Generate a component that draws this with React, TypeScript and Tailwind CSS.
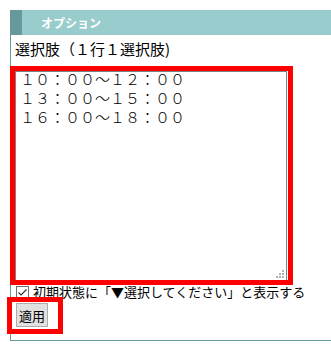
import React, { useState } from 'react';

const jp = { fontFamily: '"Noto Sans CJK JP", "Noto Sans", sans-serif' };

const App: React.FC = () => {
  const [text, setText] = useState('１０：００～１２：００\n１３：００～１５：００\n１６：００～１８：００');
  const [initial, setInitial] = useState(true);

  return (
    <div className="relative w-[331px] h-[353px] bg-white pt-[10px] pl-[10px]" style={jp}>
      <div className="border-l border-b border-[#669999] h-[331px]">
        <div className="flex h-[25px] bg-[#99cccc]">
          <div className="w-[11px] bg-[#669999]" />
          <span className="ml-[19px] text-[12px] font-bold leading-[25px] text-white">オプション</span>
        </div>
        <div className="pl-[4px]">
          <p className="mt-[4px] text-[15px] leading-[20px] text-black">選択肢（１行１選択肢)</p>
          <div className="mt-[12px] w-[272px] h-[210px] border border-[#808080] overflow-hidden">
            <textarea
              value={text}
              onChange={e => setText(e.target.value)}
              className="-mt-[3px] block w-full h-[211px] border-0 px-[4px] pt-0 text-[15px] font-light leading-[19px] text-black outline-none resize-none"
              style={jp}
            />
          </div>
          <label
            className="mt-[3px] flex items-center gap-[4px] text-[13px] leading-[16px] text-black"
            onClick={() => setInitial(v => !v)}
          >
            <span className="ml-[1px] flex w-[13px] h-[13px] items-center justify-center border border-[#707070] bg-white">
              {initial && (
                <svg width="11" height="11" viewBox="0 0 11 11" fill="none">
                  <path d="M1.5 5.5 L4 8 L9.5 2.5" stroke="#333" strokeWidth="1.2" />
                </svg>
              )}
            </span>
            初期状態に「▼選択してください」と表示する
          </label>
          <button className="mt-[3px] ml-[1px] w-[32px] h-[24px] border border-[#adadad] bg-[#e1e1e1] text-[13px] leading-none text-black">
            適用
          </button>
        </div>
      </div>

      {/* resize grip dots */}
      <svg className="pointer-events-none absolute left-[276px] top-[270px]" width="9" height="9" viewBox="0 0 9 9">
        <rect x="6" y="0" width="2" height="2" fill="#b0b0b0" />
        <rect x="3" y="3" width="2" height="2" fill="#b0b0b0" />
        <rect x="6" y="3" width="2" height="2" fill="#b0b0b0" />
        <rect x="0" y="6" width="2" height="2" fill="#b0b0b0" />
        <rect x="3" y="6" width="2" height="2" fill="#b0b0b0" />
        <rect x="6" y="6" width="2" height="2" fill="#b0b0b0" />
      </svg>

      <div className="pointer-events-none absolute left-[10px] top-[66px] w-[283px] h-[219px] border-[5px] border-[#ff0000]" />
      <div className="pointer-events-none absolute left-[7px] top-[297px] w-[56px] h-[37px] border-[5px] border-[#ff0000]" />
    </div>
  );
};

export default App;
